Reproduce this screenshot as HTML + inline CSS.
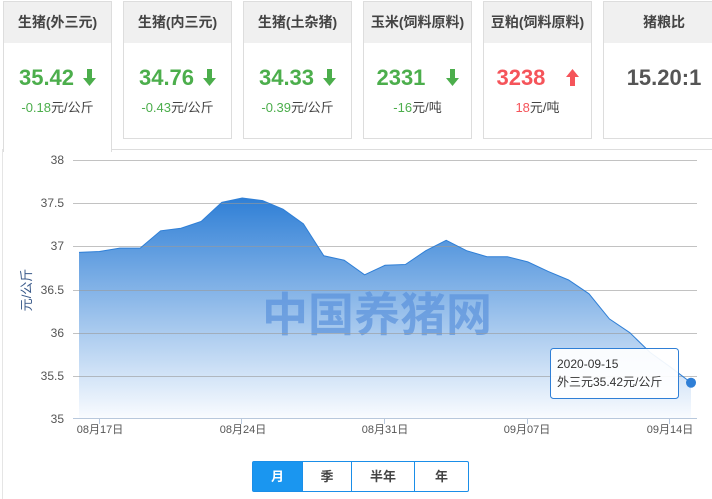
<!DOCTYPE html>
<html><head><meta charset="utf-8"><style>
body{margin:0;width:712px;height:499px;background:#fff;font-family:"Liberation Sans","Noto Sans CJK SC",sans-serif;position:relative;overflow:hidden}
.card{position:absolute;top:1px;width:107px;height:136px;border:1px solid #ddd;background:#fff;text-align:center}
.card .h{height:41px;background:#f0f0f0;line-height:41px;font-size:14px;color:#444;font-weight:bold}
.card .v{margin-top:22px;font-size:22px;font-weight:bold;line-height:26px}
.card .s{font-size:13px;margin-top:6px;color:#444}
.g{color:#4cae4c}.r{color:#f5545a}
.arr{display:inline-block;margin-left:9px;vertical-align:-1px}
.btns{position:absolute;left:252px;top:461px;height:29px;border:1px solid #1a8ee8;border-radius:2px;display:flex;font-size:13px;font-weight:bold;color:#444}
.btns div{line-height:29px;text-align:center;border-left:1px solid #1a8ee8}
</style></head><body>
<div style="position:absolute;left:2px;top:149px;width:710px;height:1px;background:#ddd"></div>
<div style="position:absolute;left:2px;top:149px;width:1px;height:350px;background:#e5e5e5"></div>
<div class="card" style="left:3px;height:150px;border-bottom:none"><div class="h">生猪(外三元)</div><div class="v g">35.42<svg class="arr" width="13" height="17"><path d="M4,0h5v9h4l-6.5,8l-6.5,-8h4z" fill="#4cae4c"/></svg></div><div class="s"><span class="g">-0.18</span>元/公斤</div></div>
<div class="card" style="left:123px"><div class="h">生猪(内三元)</div><div class="v g">34.76<svg class="arr" width="13" height="17"><path d="M4,0h5v9h4l-6.5,8l-6.5,-8h4z" fill="#4cae4c"/></svg></div><div class="s"><span class="g">-0.43</span>元/公斤</div></div>
<div class="card" style="left:243px"><div class="h">生猪(土杂猪)</div><div class="v g">34.33<svg class="arr" width="13" height="17"><path d="M4,0h5v9h4l-6.5,8l-6.5,-8h4z" fill="#4cae4c"/></svg></div><div class="s"><span class="g">-0.39</span>元/公斤</div></div>
<div class="card" style="left:363px"><div class="h">玉米(饲料原料)</div><div class="v g">2331 <svg class="arr" style="margin-left:14px" width="13" height="17"><path d="M4,0h5v9h4l-6.5,8l-6.5,-8h4z" fill="#4cae4c"/></svg></div><div class="s"><span class="g">-16</span>元/吨</div></div>
<div class="card" style="left:483px"><div class="h">豆粕(饲料原料)</div><div class="v r">3238 <svg class="arr" style="margin-left:14px" width="13" height="17"><path d="M4,17h5v-9h4l-6.5,-8l-6.5,8h4z" fill="#f5545a"/></svg></div><div class="s"><span class="r">18</span>元/吨</div></div>
<div class="card" style="left:603px;width:120px"><div class="h">猪粮比</div><div class="v" style="color:#555">15.20:1</div></div>
<svg style="position:absolute;left:0;top:0" width="712" height="499">
<defs>
<linearGradient id="g2" x1="0" y1="198" x2="0" y2="419" gradientUnits="userSpaceOnUse"><stop offset="0" stop-color="#2f7fd6"/><stop offset="1" stop-color="#fafcff"/></linearGradient></defs>
<g font-size="12" fill="#555" text-anchor="end">
<text x="64" y="164">38</text><text x="64" y="207">37.5</text><text x="64" y="250">37</text><text x="64" y="294">36.5</text><text x="64" y="337">36</text><text x="64" y="380">35.5</text><text x="64" y="423">35</text></g>
<text transform="translate(31,290) rotate(-90)" font-size="13" fill="#3a5a8a" text-anchor="middle">元/公斤</text>
<path d="M79,252.4 L99.4,251.5 L119.8,248.1 L140.2,248.1 L160.6,230.8 L181,228.2 L201.4,221.3 L221.8,202.3 L242.2,198 L262.6,200.6 L283,209.2 L303.4,223.9 L323.8,255.8 L344.2,260.2 L364.6,274.8 L385,265.3 L405.4,264.5 L425.8,250.7 L446.2,240.3 L466.6,250.7 L487,256.7 L507.4,256.7 L527.8,261.9 L548.2,271.4 L568.6,280 L589,293.8 L609.4,318.9 L629.8,332.7 L650.2,352.5 L670.6,367.2 L691,382.7 L691,419 L79,419Z" fill="url(#g2)"/>
<text x="377" y="331" font-size="46" font-weight="bold" fill="#5a92dc" fill-opacity="0.7" text-anchor="middle">中国养猪网</text>
<g stroke="#999" stroke-opacity="0.6" stroke-width="1">
<line x1="73" y1="160.5" x2="697" y2="160.5"/><line x1="73" y1="203.5" x2="697" y2="203.5"/><line x1="73" y1="246.5" x2="697" y2="246.5"/><line x1="73" y1="290.5" x2="697" y2="290.5"/><line x1="73" y1="333.5" x2="697" y2="333.5"/><line x1="73" y1="376.5" x2="697" y2="376.5"/></g>
<line x1="73" y1="418.5" x2="697" y2="418.5" stroke="#b8c8dc"/>
<g stroke="#b8c8dc"><line x1="99.5" y1="419" x2="99.5" y2="424"/><line x1="241.5" y1="419" x2="241.5" y2="424"/><line x1="384.5" y1="419" x2="384.5" y2="424"/><line x1="527.5" y1="419" x2="527.5" y2="424"/><line x1="669.5" y1="419" x2="669.5" y2="424"/></g>
<path d="M79,252.4 L99.4,251.5 L119.8,248.1 L140.2,248.1 L160.6,230.8 L181,228.2 L201.4,221.3 L221.8,202.3 L242.2,198 L262.6,200.6 L283,209.2 L303.4,223.9 L323.8,255.8 L344.2,260.2 L364.6,274.8 L385,265.3 L405.4,264.5 L425.8,250.7 L446.2,240.3 L466.6,250.7 L487,256.7 L507.4,256.7 L527.8,261.9 L548.2,271.4 L568.6,280 L589,293.8 L609.4,318.9 L629.8,332.7 L650.2,352.5 L670.6,367.2 L691,382.7" fill="none" stroke="#2f7fd6" stroke-width="1"/>
<g font-size="11" fill="#555" text-anchor="middle"><text x="100" y="433">08月17日</text><text x="243" y="433">08月24日</text><text x="385" y="433">08月31日</text><text x="527" y="433">09月07日</text><text x="670" y="433">09月14日</text></g>
<circle cx="691" cy="382.7" r="5" fill="#2f7fd6"/>
<rect x="550.5" y="348.5" width="128" height="50" rx="3" fill="#fff" fill-opacity="0.92" stroke="#2f7fd6"/>
<text x="557" y="368" font-size="12" fill="#333">2020-09-15</text>
<text x="557" y="386" font-size="12" fill="#333">外三元35.42元/公斤</text>
</svg>
<div class="btns"><div style="width:49px;background:#1a96f0;color:#fff;border-left:none">月</div><div style="width:48px">季</div><div style="width:62px">半年</div><div style="width:53px">年</div></div>
</body></html>
